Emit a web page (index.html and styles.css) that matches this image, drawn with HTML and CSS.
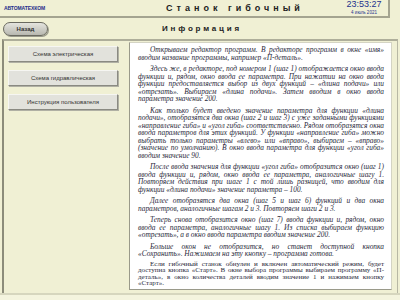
FILE: index.html
```html
<!DOCTYPE html>
<html lang="ru">
<head>
<meta charset="utf-8">
<link rel="stylesheet" href="styles.css">
</head>
<body>
<div class="screen">
  <header class="top">
    <div class="brand">АВТОМАТЕХКОМ</div>
    <div class="title">Станок гибочный</div>
    <div class="clock">
      <div class="time">23:53:27</div>
      <div class="date">4 июль 2021</div>
    </div>
  </header>
  <div class="nav">
    <button class="back">Назад</button>
    <div class="subtitle">Информация</div>
  </div>
  <div class="main">
    <aside class="side">
      <button class="sbtn">Схема электрическая</button>
      <button class="sbtn">Схема гидравлическая</button>
      <button class="sbtn">Инструкция пользователя</button>
    </aside>
    <section class="doc">
      <p>Открываем редактор программ. В редакторе программ в окне «имя» вводим название программы, например «П-деталь».</p>
      <p>Здесь же, в редакторе, под номером 1 (шаг 1) отображается окно ввода функции и, рядом, окно ввода ее параметра. При нажатии на окно ввода функции предоставляется выбор из двух функций – «длина подачи» или «отрезать». Выбираем «длина подачи». Затем вводим в окно ввода параметра значение 200.</p>
      <p>Как только будет введено значение параметра для функции «длина подачи», отобразятся два окна (шаг 2 и шаг 3) с уже заданными функциями «направление гиба» и «угол гиба» соответственно. Рядом отобразятся окна ввода параметров для этих функций. У функции «направление гиба» можно выбрать только параметры «влево» или «вправо», выбираем – «вправо» (значение по умолчанию). В окно ввода параметра для функции «угол гиба» вводим значение 90.</p>
      <p>После ввода значения для функции «угол гиба» отобразится окно (шаг 1) ввода функции и, рядом, окно ввода ее параметра, аналогичные шагу 1. Повторяем действия при шаге 1 с той лишь разницей, что вводим для функции «длина подачи» значение параметра – 100.</p>
      <p>Далее отобразятся два окна (шаг 5 и шаг 6) функций и два окна параметров, аналогичные шагам 2 и 3. Повторяем шаги 2 и 3.</p>
      <p>Теперь снова отобразится окно (шаг 7) ввода функции и, рядом, окно ввода ее параметра, аналогичные шагу 1. Из списка выбираем функцию «отрезать», а в окно ввода параметра вводим значение 200.</p>
      <p>Больше окон не отобразится, но станет доступной кнопка «Сохранить». Нажимаем на эту кнопку – программа готова.</p>
      <p class="plain">Если гибочный станок обнулен и включен автоматический режим, будет доступна кнопка «Старт». В окне выбора программы выбираем программу «П-деталь», в окно количества деталей вводим значение 1 и нажимаем кнопку «Старт».</p>
    </section>
  </div>
  <div class="foot"></div>
</div>
</body>
</html>
```
FILE: styles.css
```css
* { box-sizing: border-box; }
html, body { margin: 0; padding: 0; }
body {
  width: 400px;
  height: 300px;
  overflow: hidden;
  background: #f0f0d4;
  font-family: "Liberation Sans", Arial, sans-serif;
}
.screen {
  width: 400px;
  height: 300px;
  display: flex;
  flex-direction: column;
}
.top {
  width: 390px;
  height: 18px;
  display: flex;
  align-items: center;
  border-right: 2px solid #a4a490;
  border-bottom: 2px solid #a4a490;
  padding: 0 4px;
}
.brand {
  width: 130px;
  font-size: 5px;
  font-weight: bold;
  color: #1e2a8a;
  letter-spacing: -0.1px;
}
.title {
  flex: 1;
  text-align: center;
  font-size: 9px;
  font-weight: bold;
  letter-spacing: 4px;
  color: #222;
  padding-right: 8px;
}
.clock {
  width: 40px;
  text-align: center;
  color: #24308e;
  line-height: 1;
}
.time { font-size: 9px; margin-top: -1px; }
.date { font-size: 4.5px; margin-top: 2px; }
.nav {
  height: 21px;
  display: flex;
  align-items: center;
  padding-left: 3px;
}
.back {
  width: 45px;
  height: 14px;
  border-radius: 7px;
  border: 1px solid #6a6a60;
  background: linear-gradient(#e4e4de, #b8b8b0);
  box-shadow: 1px 1px 0 #9a9a8c;
  font-family: "Liberation Sans", Arial, sans-serif;
  font-size: 6px;
  font-weight: bold;
  color: #333;
  padding: 0;
}
.subtitle {
  flex: 1;
  text-align: center;
  font-size: 8px;
  font-weight: bold;
  letter-spacing: 2.8px;
  color: #222;
  padding-right: 44px;
}
.main {
  height: 254px;
  display: flex;
  border-top: 2px solid #aeae9a;
  border-left: 2px solid #8c8c7a;
  border-right: 1px solid #b8b8a4;
  margin: 0 2px 0 2px;
}
.side {
  width: 125px;
  display: flex;
  flex-direction: column;
  gap: 8px;
  padding: 5px 0 0 4px;
}
.sbtn {
  width: 110px;
  height: 16px;
  background: #e2e2dc;
  border: 1px solid;
  border-color: #f6f6f2 #8a8a82 #8a8a82 #f6f6f2;
  box-shadow: 1px 1px 0 #b0b0a4;
  font-family: "Liberation Sans", Arial, sans-serif;
  font-size: 6px;
  color: #333;
  padding: 0;
}
.doc {
  width: 263px;
  height: 248px;
  margin-top: 1px;
  background: #fff;
  border-left: 1px solid #9a9a8a;
  border-bottom: 1px solid #9a9a8a;
  border-top: 1px solid #d4d4c4;
  border-right: 1px solid #d4d4c4;
  padding: 3px 7px 0 8px;
  overflow: hidden;
  font-family: "Liberation Serif", "Times New Roman", serif;
  font-style: italic;
  font-size: 7.4px;
  line-height: 7.5px;
  color: #2a2a3a;
}
.doc p {
  margin: 0 0 4px 0;
  text-indent: 12px;
  text-align: justify;
}
.doc p.plain {
  font-style: normal;
  font-size: 7px;
  line-height: 6.6px;
  margin-top: -1px;
}
.foot {
  flex: 1;
  border-top: 2px solid #d6d6be;
  background: #f4f4de;
}
```
